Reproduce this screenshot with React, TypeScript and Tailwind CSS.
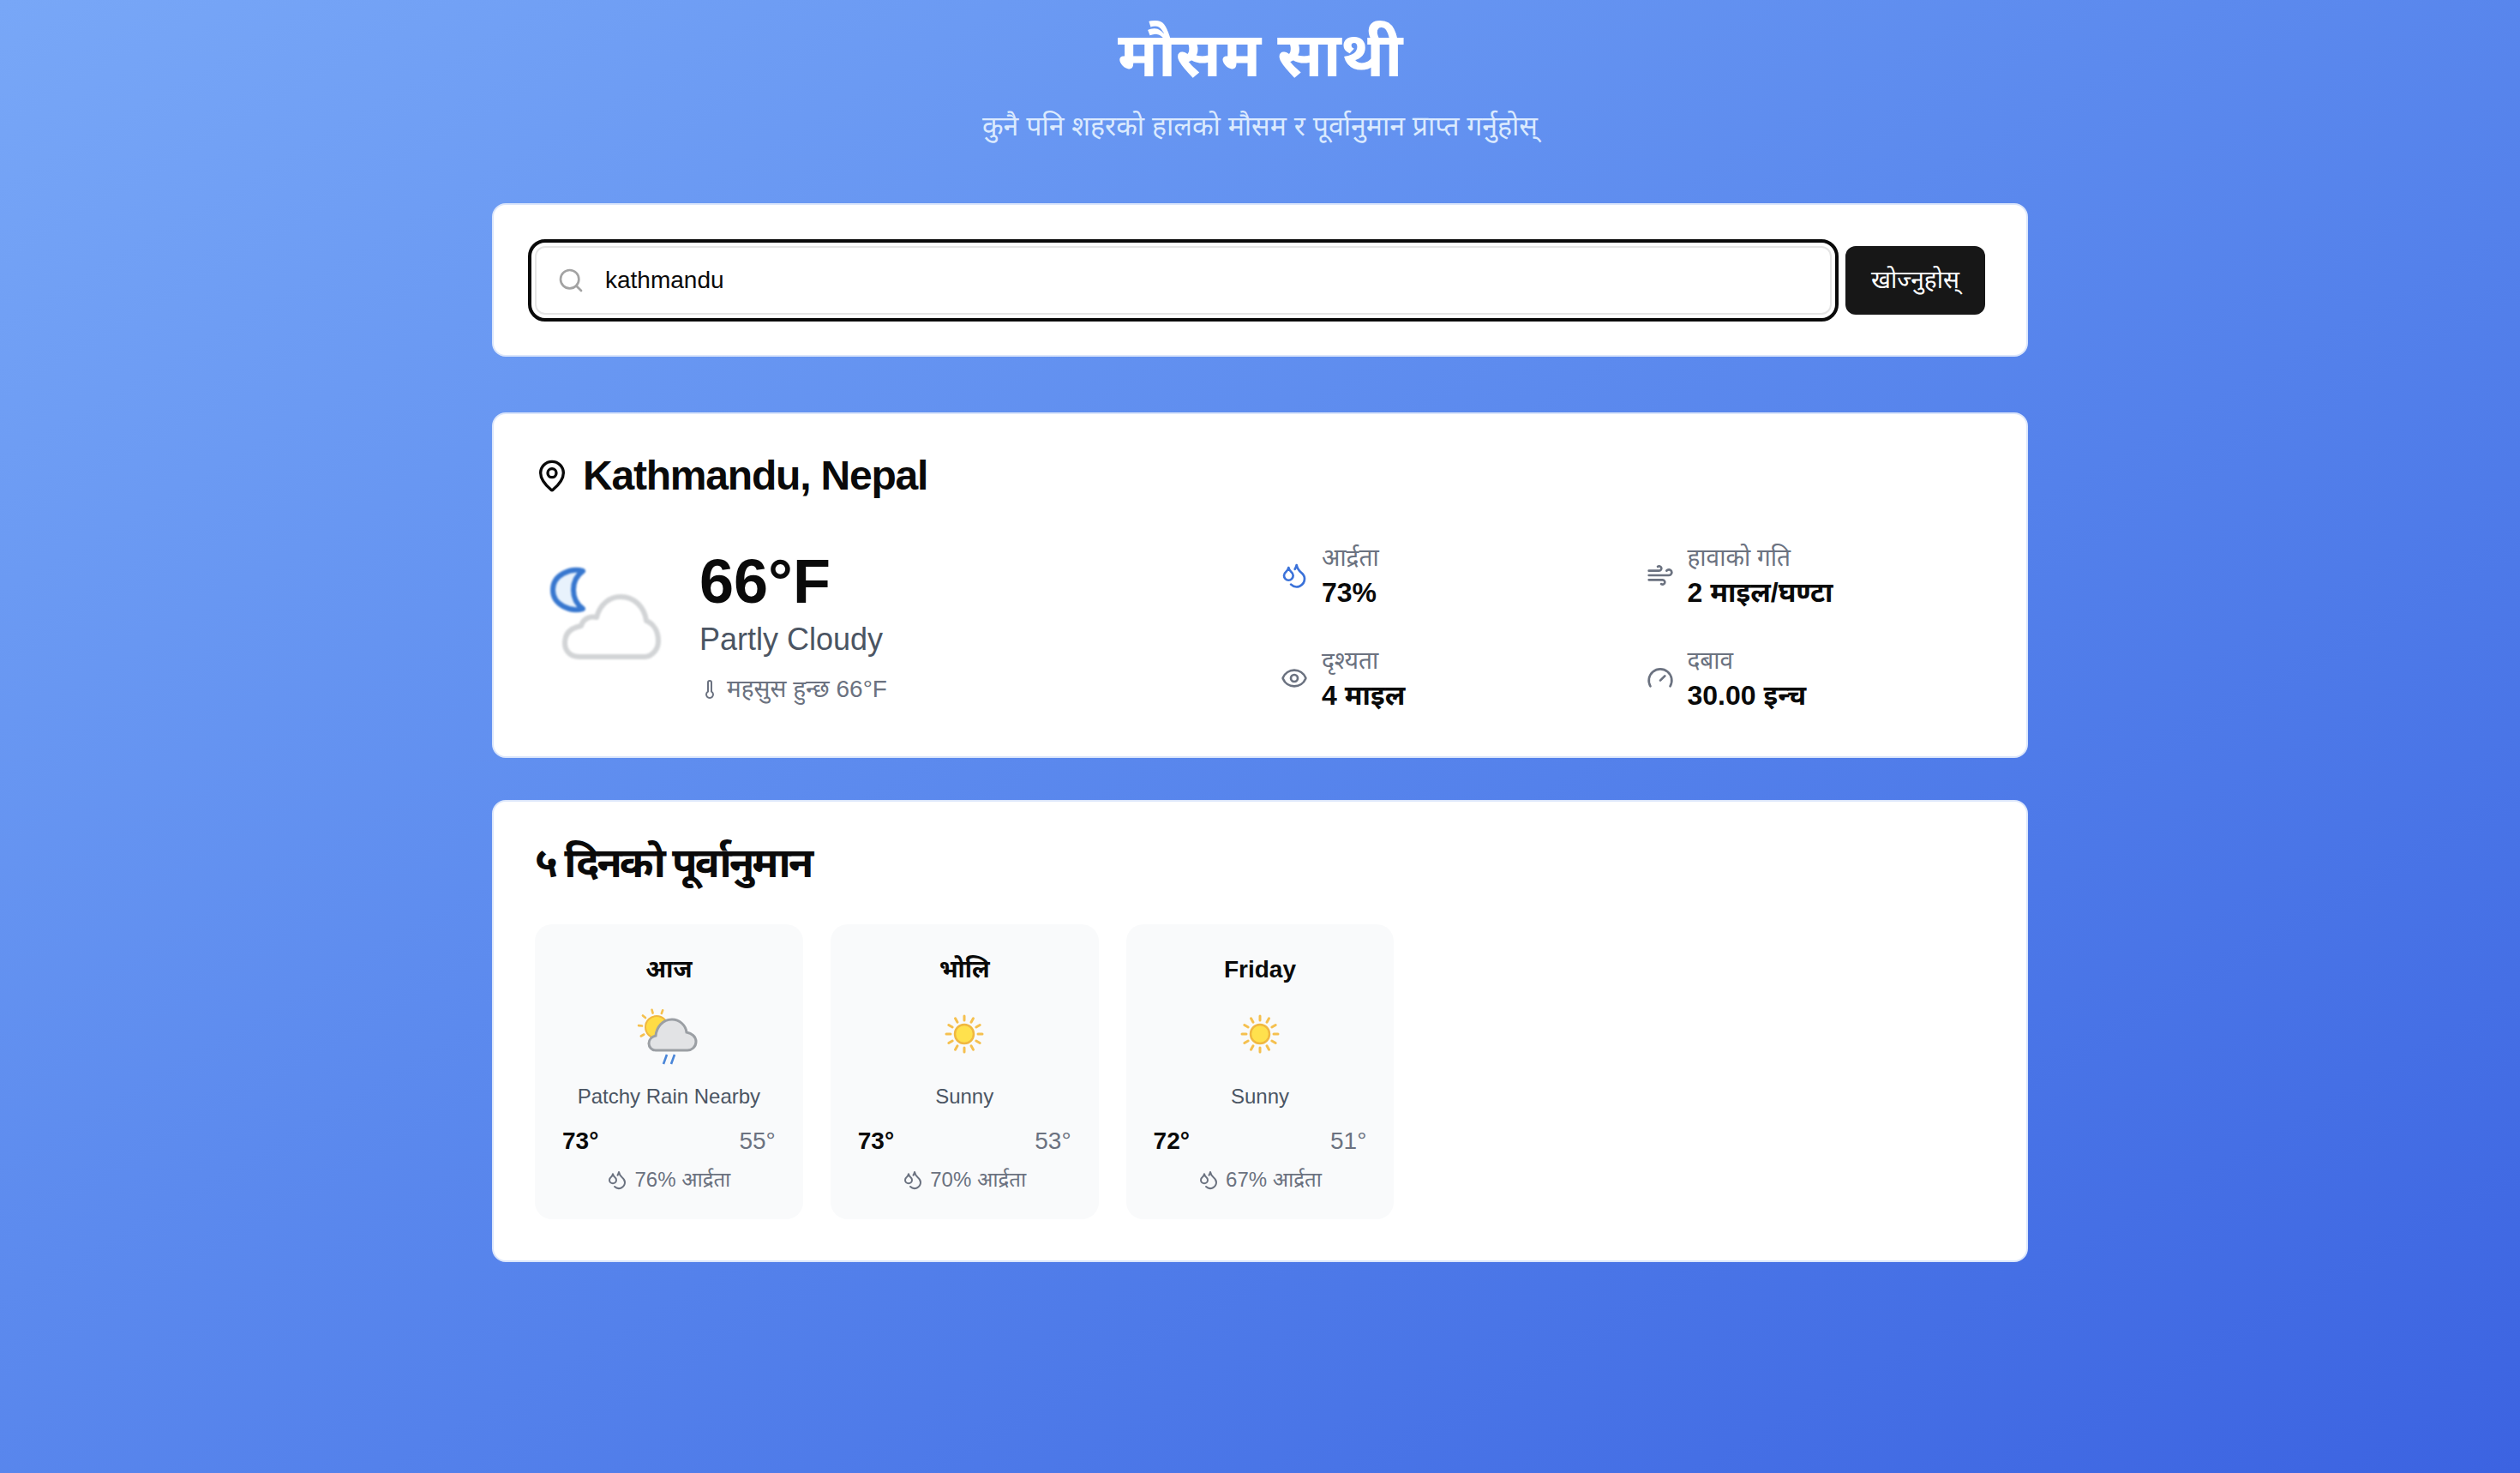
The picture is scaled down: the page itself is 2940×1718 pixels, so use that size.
import { Droplets, Eye, Gauge, MapPin, Search, Thermometer, Wind } from "lucide-react";

const rays = [0, 30, 60, 90, 120, 150, 180, 210, 240, 270, 300, 330];

function SunIcon() {
  return (
    <svg viewBox="0 0 96 96" className="h-[96px] w-[96px]">
      {rays.map((r) => (
        <line key={r} x1="48" y1="32" x2="48" y2="27" transform={`rotate(${r} 48 48)`} stroke="#f5c04f" strokeWidth="3" strokeLinecap="round" />
      ))}
      <circle cx="48" cy="48" r="11" fill="#ffe14d" stroke="#f0b840" strokeWidth="2.5" />
    </svg>
  );
}

function RainCloudIcon() {
  return (
    <svg viewBox="0 0 96 96" className="h-[96px] w-[96px]">
      {[170, 205, 240, 275, 310, 345, 20].map((r) => (
        <line key={r} x1="34" y1="23" x2="34" y2="19" transform={`rotate(${r} 34 40)`} stroke="#f5c04f" strokeWidth="2.6" strokeLinecap="round" />
      ))}
      <circle cx="34" cy="40" r="13" fill="#ffdc45" stroke="#f0b840" strokeWidth="2" />
      <path d="M33 67c-5 0-8-4-8-8 0-5 4-8 8-9 1-10 8-19 19-19 9 0 16 7 17 15 6 1 11 5 11 11 0 6-5 10-10 10z" fill="#e2e3e5" stroke="#9b9fa4" strokeWidth="3" />
      <path d="M46 72l-4 11M55 72l-4 11" stroke="#4a86d8" strokeWidth="2.6" />
    </svg>
  );
}

function MoonCloudIcon() {
  return (
    <svg viewBox="0 11 160 160" className="h-[160px] w-[160px] blur-[0.8px]">
      <path d="M56 26C42 22 21 30 21 48 21 66 42 74 56 70 49 65 45 57 45 48 45 39 49 31 56 26z" fill="#e8f2fc" stroke="#3777cf" strokeWidth="6" strokeLinejoin="round" />
      <path d="M52 126C40 126 35 118 35 110 35 98 43 92 54 90 56 82 64 78 72 80 76 64 88 56 100 56 116 56 128 68 130 84 140 88 144 98 144 108 144 118 136 126 128 126z" fill="#ffffff" stroke="#d2d4d6" strokeWidth="6" strokeLinejoin="round" />
    </svg>
  );
}

function Stat({ icon, label, value }: { icon: React.ReactNode; label: string; value: string }) {
  return (
    <div className="flex items-center gap-[16px]">
      {icon}
      <div>
        <p className="text-[28px] leading-[40px] text-[#6b7280]">{label}</p>
        <p className="text-[32px] leading-[40px] font-bold text-[#0a0a0a]">{value}</p>
      </div>
    </div>
  );
}

function ForecastCard({
  day,
  icon,
  condition,
  high,
  low,
  humidity,
}: {
  day: string;
  icon: React.ReactNode;
  condition: string;
  high: string;
  low: string;
  humidity: string;
}) {
  return (
    <div className="flex h-[344px] flex-col items-center rounded-[20px] bg-[#f9fafb] px-[32px] pt-[33px]">
      <p className="h-[40px] text-[28px] leading-[40px] font-bold text-[#0a0a0a]">{day}</p>
      <div className="mt-[7px] flex h-[96px] items-center justify-center">{icon}</div>
      <p className="mt-[5px] text-[24px] leading-[40px] text-[#4b5563]">{condition}</p>
      <div className="mt-[12px] flex w-full items-center justify-between text-[28px] leading-[40px]">
        <span className="font-bold text-[#0a0a0a]">{high}</span>
        <span className="text-[#6b7280]">{low}</span>
      </div>
      <div className="mt-[7px] flex items-center gap-[8px] text-[24px] leading-[36px] text-[#6b7280]">
        <Droplets size={24} />
        <span>{humidity} आर्द्रता</span>
      </div>
    </div>
  );
}

export default function App() {
  return (
    <div className="min-h-[1718px] bg-gradient-to-br from-[#78a7f7] to-[#3c63e1] font-['Liberation_Sans','Noto_Sans',sans-serif]">
      <div className="mx-auto w-[1792px]">
        <header className="text-center">
          <h1 className="pt-[24px] text-[72px] leading-[80px] font-bold tracking-[-0.5px] text-white">मौसम साथी</h1>
          <p className="mt-[15px] text-[32px] leading-[56px] text-[#dbeafe]">
            कुनै पनि शहरको हालको मौसम र पूर्वानुमान प्राप्त गर्नुहोस्
          </p>
        </header>

        <section className="mt-[62px] flex h-[179px] items-center gap-[16px] rounded-[16px] border-2 border-[#dbe6fb] bg-white px-[48px]">
          <div className="flex h-[80px] flex-1 items-center gap-[24px] rounded-[12px] border-2 border-[#e5e5e5] bg-white px-[24px] outline-[4px] outline-offset-[4px] outline-[#0a0a0a]">
            <Search size={32} className="text-[#a3a3a3]" />
            <span className="text-[28px] text-[#0a0a0a]">kathmandu</span>
          </div>
          <button className="h-[80px] w-[163px] rounded-[12px] bg-[#171717] text-[28px] text-white">खोज्नुहोस्</button>
        </section>

        <section className="mt-[65px] h-[403px] rounded-[16px] border-2 border-[#dbe6fb] bg-white px-[48px] pt-[40px]">
          <div className="flex items-center gap-[16px]">
            <MapPin size={40} className="text-[#0a0a0a]" />
            <h2 className="text-[48px] leading-[64px] font-bold tracking-tight text-[#0a0a0a]">Kathmandu, Nepal</h2>
          </div>
          <div className="mt-[44px] grid grid-cols-2 gap-[48px]">
            <div className="flex items-center gap-[32px]">
              <MoonCloudIcon />
              <div>
                <p className="text-[72px] leading-[80px] font-bold text-[#0a0a0a]">66°F</p>
                <p className="text-[36px] leading-[56px] text-[#4b5563]">Partly Cloudy</p>
                <p className="mt-[10px] flex items-center gap-[8px] text-[28px] leading-[40px] text-[#6b7280]">
                  <Thermometer size={24} />
                  महसुस हुन्छ 66°F
                </p>
              </div>
            </div>
            <div className="grid grid-cols-2 gap-x-[31px] gap-y-[40px]">
              <Stat icon={<Droplets size={32} className="text-[#3b72d9]" />} label="आर्द्रता" value="73%" />
              <Stat icon={<Wind size={32} className="text-[#6b7280]" />} label="हावाको गति" value="2 माइल/घण्टा" />
              <Stat icon={<Eye size={32} className="text-[#6b7280]" />} label="दृश्यता" value="4 माइल" />
              <Stat icon={<Gauge size={32} className="text-[#6b7280]" />} label="दबाव" value="30.00 इन्च" />
            </div>
          </div>
        </section>

        <section className="mt-[49px] h-[539px] rounded-[16px] border-2 border-[#dbe6fb] bg-white px-[48px] pt-[40px]">
          <h2 className="text-[48px] leading-[64px] font-bold tracking-[-3px] text-[#0a0a0a]">५ दिनको पूर्वानुमान</h2>
          <div className="mt-[39px] grid grid-cols-5 gap-[32px]">
            <ForecastCard day="आज" icon={<RainCloudIcon />} condition="Patchy Rain Nearby" high="73°" low="55°" humidity="76%" />
            <ForecastCard day="भोलि" icon={<SunIcon />} condition="Sunny" high="73°" low="53°" humidity="70%" />
            <ForecastCard day="Friday" icon={<SunIcon />} condition="Sunny" high="72°" low="51°" humidity="67%" />
          </div>
        </section>
      </div>
    </div>
  );
}
